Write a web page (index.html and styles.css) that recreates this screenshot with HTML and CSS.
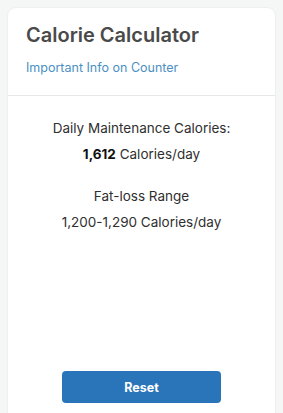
FILE: index.html
```html
<!DOCTYPE html>
<html lang="en">
<head>
    <meta charset="UTF-8">
    <meta name="viewport" content="width=device-width, initial-scale=1.0">
    <title>Calorie Calculator</title>
    <link rel="stylesheet" href="styles.css">
</head>
<body>
    <div class="card">
        <div class="card-header">
            <h1>Calorie Calculator</h1>
            <a href="#" class="info-link">Important Info on Counter</a>
        </div>
        <div class="card-body">
            <div class="result">
                <p class="label">Daily Maintenance Calories:</p>
                <p class="value"><strong>1,612</strong> Calories/day</p>
            </div>
            <div class="result">
                <p class="label">Fat-loss Range</p>
                <p class="value">1,200-1,290 Calories/day</p>
            </div>
            <button type="button" class="reset-btn">Reset</button>
        </div>
    </div>
</body>
</html>
```

FILE: styles.css
```css
body {
    font-family: Inter, "Open Sans", sans-serif;
    margin: 0;
    padding: 7px 7px 0 7px;
    background-color: #f5f6f6;
    overflow: hidden;
}
.card {
    width: 269px;
    height: 420px;
    background-color: #fff;
    border-radius: 9px;
    border: 1px solid #eef0f0;
    box-sizing: border-box;
}
.card-header {
    padding: 14px 19px 19px 18px;
    border-bottom: 1px solid #e6e8e8;
}
h1 {
    margin: 0;
    font-size: 20px;
    font-weight: 600;
    color: #4a4a4a;
    line-height: 26px;
}
.info-link {
    display: block;
    margin-top: 12px;
    font-size: 12.5px;
    color: #4b8fc3;
    text-decoration: none;
    line-height: 16px;
}
.card-body {
    display: flex;
    flex-direction: column;
    align-items: center;
    padding-top: 19px;
    color: #2f2f2f;
}
.result {
    text-align: center;
    margin-bottom: 16px;
}
.result p {
    margin: 0;
    font-size: 13.5px;
    line-height: 26px;
}
.result strong {
    font-weight: 700;
    color: #111;
}
.reset-btn {
    margin-top: 120px;
    width: 159px;
    height: 32px;
    background-color: #2a74b9;
    color: #fff;
    border: none;
    border-radius: 4px;
    font-family: inherit;
    font-size: 12.5px;
    font-weight: 700;
    cursor: pointer;
}
```
